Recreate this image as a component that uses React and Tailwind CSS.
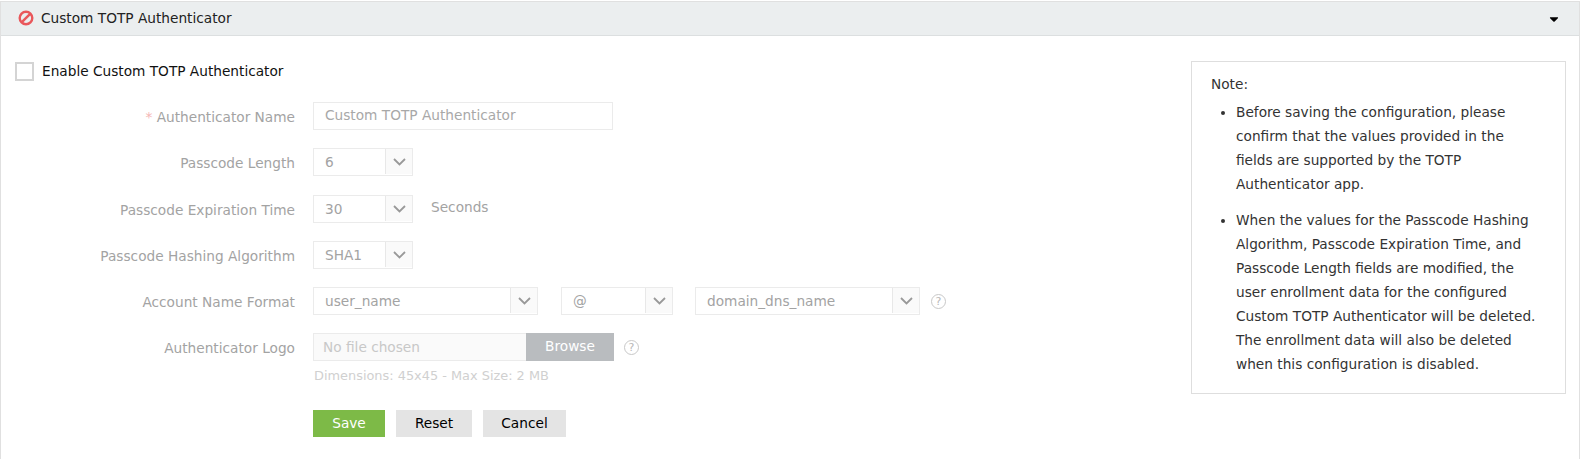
import { FaCaretDown } from "react-icons/fa";

function Chevron() {
  return (
    <svg width="13" height="8" viewBox="0 0 13 8" fill="none" stroke="#999999" strokeWidth="1.8">
      <path d="M1 1l5.5 5.5L12 1" />
    </svg>
  );
}

function Select({ value, width }) {
  return (
    <div className={`${width} h-[28px] flex border border-[#ebebeb] bg-white`}>
      <div className="flex-1 pl-[11px] leading-[26px] text-[#a3a3a3]">{value}</div>
      <div className="w-[27px] flex items-center justify-center bg-[#fafafa] border-l border-[#e8e8e8] mb-[1px]">
        <Chevron />
      </div>
    </div>
  );
}

function Help() {
  return (
    <div className="w-[15px] h-[15px] rounded-full border-[1.5px] border-[#c8c8c8] flex items-center justify-center text-[11px] leading-none text-[#b8b8b8]">
      ?
    </div>
  );
}

function Row({ label, required, children, className }) {
  return (
    <div className={`flex items-start ${className}`}>
      <div className="w-[294px] h-[28px] text-right leading-[30px] text-[#a3a3a3] shrink-0">
        {required && <span className="text-[#f5b5b5]">* </span>}
        {label}
      </div>
      <div className="ml-[18px] flex items-center">{children}</div>
    </div>
  );
}

export default function App() {
  return (
    <div className="h-[459px] pt-[1px] bg-white font-['DejaVu_Sans',sans-serif] text-[13.7px] text-[#222222] overflow-hidden">
      <div className="h-[458px] mr-[1px] border-x border-t border-[#e0e0e0]">
        <div className="h-[34px] flex items-center justify-between bg-[#ebeeef] border-b border-[#dcdfe0] pl-[17px] pr-[18px]">
          <div className="flex items-center">
            <svg width="16" height="16" viewBox="0 0 16 16" fill="none" stroke="#e9575b" strokeWidth="2.4">
              <circle cx="8" cy="8" r="6.3" />
              <path d="M3.6 12.4 12.4 3.6" />
            </svg>
            <span className="ml-[7px]">Custom TOTP Authenticator</span>
          </div>
          <FaCaretDown className="w-[14px] h-[14px] text-black" />
        </div>

        <div className="flex justify-between">
          <div>
            <div className="flex items-center h-[21px] mt-[25px] ml-[14px]">
              <div className="w-[19px] h-[19px] border-2 border-[#d4d4d4] bg-white" />
              <span className="ml-[8px] text-[#111111]">Enable Custom TOTP Authenticator</span>
            </div>

            <Row label="Authenticator Name" required className="mt-[20px]">
              <div className="w-[300px] h-[28px] border border-[#ebebeb] pl-[11px] leading-[25px] text-[#a8a8a8]">
                Custom TOTP Authenticator
              </div>
            </Row>
            <Row label="Passcode Length" className="mt-[18px]">
              <Select value="6" width="w-[100px]" />
            </Row>
            <Row label="Passcode Expiration Time" className="mt-[19px]">
              <Select value="30" width="w-[100px]" />
              <span className="ml-[18px] mb-[3px] text-[#a3a3a3]">Seconds</span>
            </Row>
            <Row label="Passcode Hashing Algorithm" className="mt-[18px]">
              <Select value="SHA1" width="w-[100px]" />
            </Row>
            <Row label="Account Name Format" className="mt-[18px]">
              <Select value="user_name" width="w-[225px]" />
              <div className="ml-[23px]">
                <Select value="@" width="w-[112px]" />
              </div>
              <div className="ml-[22px]">
                <Select value="domain_dns_name" width="w-[225px]" />
              </div>
              <div className="ml-[11px]">
                <Help />
              </div>
            </Row>
            <Row label="Authenticator Logo" className="mt-[18px]">
              <div className="w-[213px] h-[28px] border border-r-0 border-[#ebebeb] bg-[#fafafa] pl-[9px] leading-[26px] text-[#c8c8c8]">
                No file chosen
              </div>
              <div className="w-[88px] h-[28px] bg-[#b9bcbf] text-white text-center leading-[27px]">Browse</div>
              <div className="ml-[10px]">
                <Help />
              </div>
            </Row>
            <div className="ml-[313px] mt-[6px] text-[12.9px] leading-[17px] text-[#d0d0d0]">
              Dimensions: 45x45 - Max Size: 2 MB
            </div>
            <div className="ml-[312px] mt-[26px] flex gap-[11px]">
              <div className="w-[72px] h-[27px] bg-[#7dba47] text-white text-center leading-[27px]">Save</div>
              <div className="w-[76px] h-[27px] bg-[#e4e4e4] text-black text-center leading-[27px]">Reset</div>
              <div className="w-[83px] h-[27px] bg-[#e4e4e4] text-black text-center leading-[27px]">Cancel</div>
            </div>
          </div>

          <div className="w-[375px] h-[333px] mt-[25px] mr-[13px] border border-[#dedede] pl-[19px] pr-[25px] pt-[12px] text-[#333333] leading-[24px]">
            <div className="leading-[20px]">Note:</div>
            <ul className="list-disc ml-[25px] mt-[6px]">
              <li>
                Before saving the configuration, please confirm that the values provided in the fields are supported by
                the TOTP Authenticator app.
              </li>
              <li className="mt-[12px]">
                When the values for the Passcode Hashing Algorithm, Passcode Expiration Time, and Passcode Length fields
                are modified, the user enrollment data for the configured Custom TOTP Authenticator will be deleted. The
                enrollment data will also be deleted when this configuration is disabled.
              </li>
            </ul>
          </div>
        </div>
      </div>
    </div>
  );
}
